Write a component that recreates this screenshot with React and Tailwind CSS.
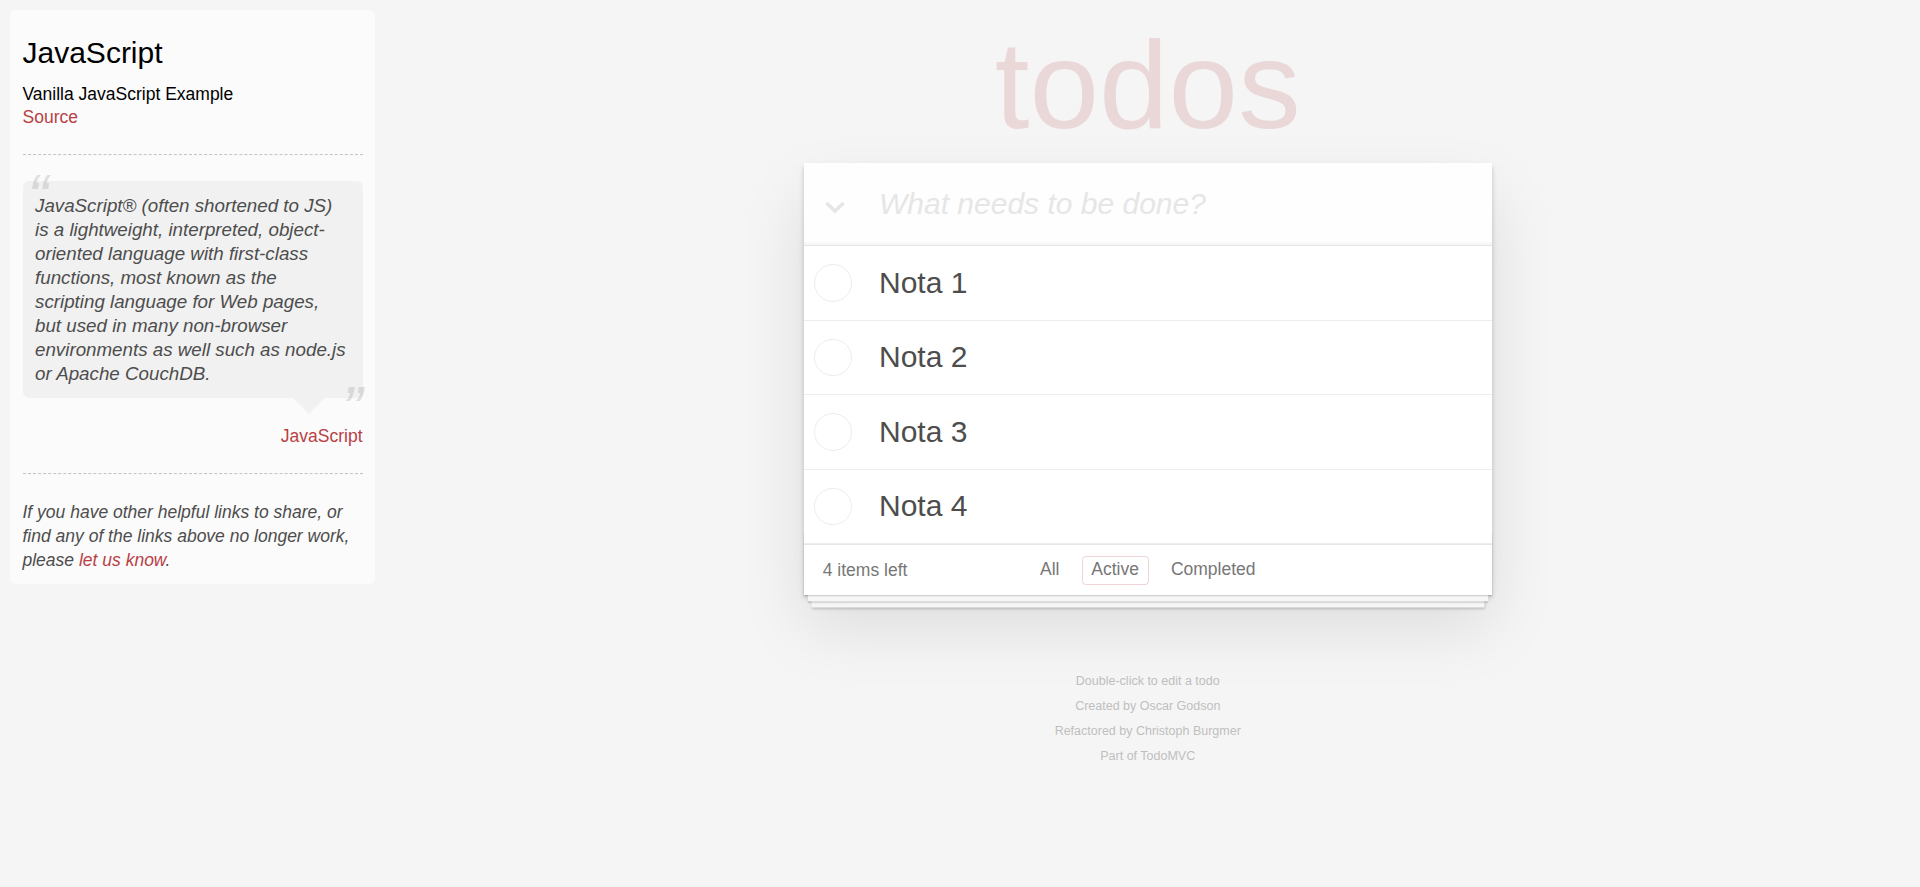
import { useState } from "react";

// Sidebar with the "learn" info about the framework
const LearnPanel = () => {
  return (
    <aside className="ml-[10px] mt-[10px] w-[365px] shrink-0 p-[12.5px] rounded-[6.25px] bg-[rgba(255,255,255,0.6)]">
      <h3 className="mt-[12.5px] text-[30px] leading-[36px] text-black">JavaScript</h3>
      <h5 className="mt-[12.5px] text-[17.5px] leading-[21px] text-black">Vanilla JavaScript Example</h5>
      <a href="#" className="block w-fit text-[17.5px] leading-[24.5px] text-[#b83f45]">
        Source
      </a>

      <div className="mt-[25px] border-t border-b border-dashed border-t-[#c5c5c5] border-b-[#f7f7f7]" />

      <blockquote className="relative mt-[25px] rounded-[6.25px] bg-[rgba(0,0,0,0.04)] p-[12.5px]">
        <span className="absolute left-[5px] top-[-16px] text-[62.5px] leading-[62.5px] italic text-[#4d4d4d] opacity-15">
          “
        </span>
        <p className="text-[18.75px] leading-[24px] italic text-[#4d4d4d]">
          JavaScript® (often shortened to JS)
          <br />
          is a lightweight, interpreted, object-
          <br />
          oriented language with first-class
          <br />
          functions, most known as the
          <br />
          scripting language for Web pages,
          <br />
          but used in many non-browser
          <br />
          environments as well such as node.js
          <br />
          or Apache CouchDB.
        </p>
        <span className="absolute right-[0px] bottom-[-41px] text-[62.5px] leading-[62.5px] italic text-[#4d4d4d] opacity-15">
          ”
        </span>
        <span className="absolute top-full right-[37.5px] w-0 h-0 border-[16.25px] border-transparent border-t-[rgba(0,0,0,0.04)]" />
      </blockquote>

      <div className="mt-[25.5px] text-right text-[17.5px] leading-[24.5px]">
        <a href="#" className="text-[#b83f45]">
          JavaScript
        </a>
      </div>

      <div className="mt-[24.5px] border-t border-b border-dashed border-t-[#c5c5c5] border-b-[#f7f7f7]" />

      <p className="mt-[25px] text-[17.5px] leading-[24px] italic text-[#4d4d4d]">
        If you have other helpful links to share, or
        <br />
        find any of the links above no longer work,
        <br />
        please{" "}
        <a href="#" className="text-[#b83f45]">
          let us know
        </a>
        .
      </p>
    </aside>
  );
};

const TodoItem = ({ title }) => {
  return (
    <li className="flex items-center border-b-[1.25px] border-[#ededed]">
      <span className="ml-[10.25px] w-[37.5px] h-[37.5px] shrink-0 rounded-full border-[1.25px] border-[#ededed]" />
      <label className="ml-[27.25px] py-[18.75px] text-[30px] leading-[36px] text-[#4d4d4d]">
        {title}
      </label>
    </li>
  );
};

// Main Todo App
const App = () => {
  const [todos] = useState(["Nota 1", "Nota 2", "Nota 3", "Nota 4"]);
  const [filter, setFilter] = useState("active");

  const filters = [
    { key: "all", label: "All" },
    { key: "active", label: "Active" },
    { key: "completed", label: "Completed" },
  ];

  return (
    <div className="min-h-screen bg-[#f5f5f5] font-['Liberation_Sans',Arial,sans-serif] text-[#4d4d4d] flex items-start">
      <LearnPanel />

      <main className="ml-[429px] w-[687.5px] shrink-0">
        <h1 className="mt-[22px] text-center text-[125px] leading-[125px] text-[rgba(175,47,47,0.15)]">
          todos
        </h1>

        <section className="relative mt-[15.5px] bg-white shadow-[0_2.5px_5px_0_rgba(0,0,0,0.2),0_31.25px_62.5px_0_rgba(0,0,0,0.1)]">
          <header className="relative">
            <svg
              className="absolute left-[20px] top-[38px]"
              width="22"
              height="13"
              viewBox="0 0 22 13"
              fill="none"
            >
              <polyline
                points="2.5,2 11,10 19.5,2"
                stroke="#e6e6e6"
                strokeWidth="3.5"
                strokeLinejoin="miter"
              />
            </svg>
            <input
              className="block w-full h-[82.5px] pl-[75px] pr-[20px] text-[30px] leading-[42px] bg-[rgba(0,0,0,0.003)] shadow-[inset_0_-2.5px_1.25px_rgba(0,0,0,0.03)] outline-none placeholder:italic placeholder:text-[#e6e6e6]"
              placeholder="What needs to be done?"
            />
          </header>

          <ul className="border-t-[1.25px] border-[#e6e6e6]">
            {todos.map((t) => (
              <TodoItem key={t} title={t} />
            ))}
          </ul>

          <footer className="relative grid grid-cols-[1fr_auto_1fr] items-center h-[51.25px] px-[18.75px] border-t-[1.25px] border-[#e6e6e6] text-[17.5px] leading-[24.5px] text-[#777]">
            <div className="pointer-events-none absolute inset-x-0 bottom-0 h-[62.5px] shadow-[0_1.25px_1.25px_rgba(0,0,0,0.2),0_10px_0_-3.75px_#f6f6f6,0_11.25px_1.25px_-3.75px_rgba(0,0,0,0.2),0_20px_0_-7.5px_#f6f6f6,0_21.25px_2.5px_-7.5px_rgba(0,0,0,0.2)]" />
            <span className="relative">4 items left</span>
            <ul className="relative flex items-center gap-[4.9px]">
              {filters.map((f) => (
                <li key={f.key}>
                  <a
                    href="#"
                    onClick={(e) => {
                      e.preventDefault();
                      setFilter(f.key);
                    }}
                    className={
                      filter === f.key
                        ? "block mx-[3.75px] px-[8.75px] py-[3.75px] leading-[19.5px] rounded-[3.75px] border-[1.25px] border-[rgba(175,47,47,0.2)]"
                        : "block mx-[3.75px] px-[8.75px] py-[3.75px] leading-[19.5px] rounded-[3.75px] border-[1.25px] border-transparent"
                    }
                  >
                    {f.label}
                  </a>
                </li>
              ))}
            </ul>
            <span />
          </footer>
        </section>

        <div className="mt-[80px] flex flex-col items-center gap-[12.5px] text-[12.5px] leading-[12.5px] text-[#bfbfbf]">
          <p>Double-click to edit a todo</p>
          <p>
            Created by <a href="#">Oscar Godson</a>
          </p>
          <p>
            Refactored by <a href="#">Christoph Burgmer</a>
          </p>
          <p>
            Part of <a href="#">TodoMVC</a>
          </p>
        </div>
      </main>
    </div>
  );
};

export default App;
